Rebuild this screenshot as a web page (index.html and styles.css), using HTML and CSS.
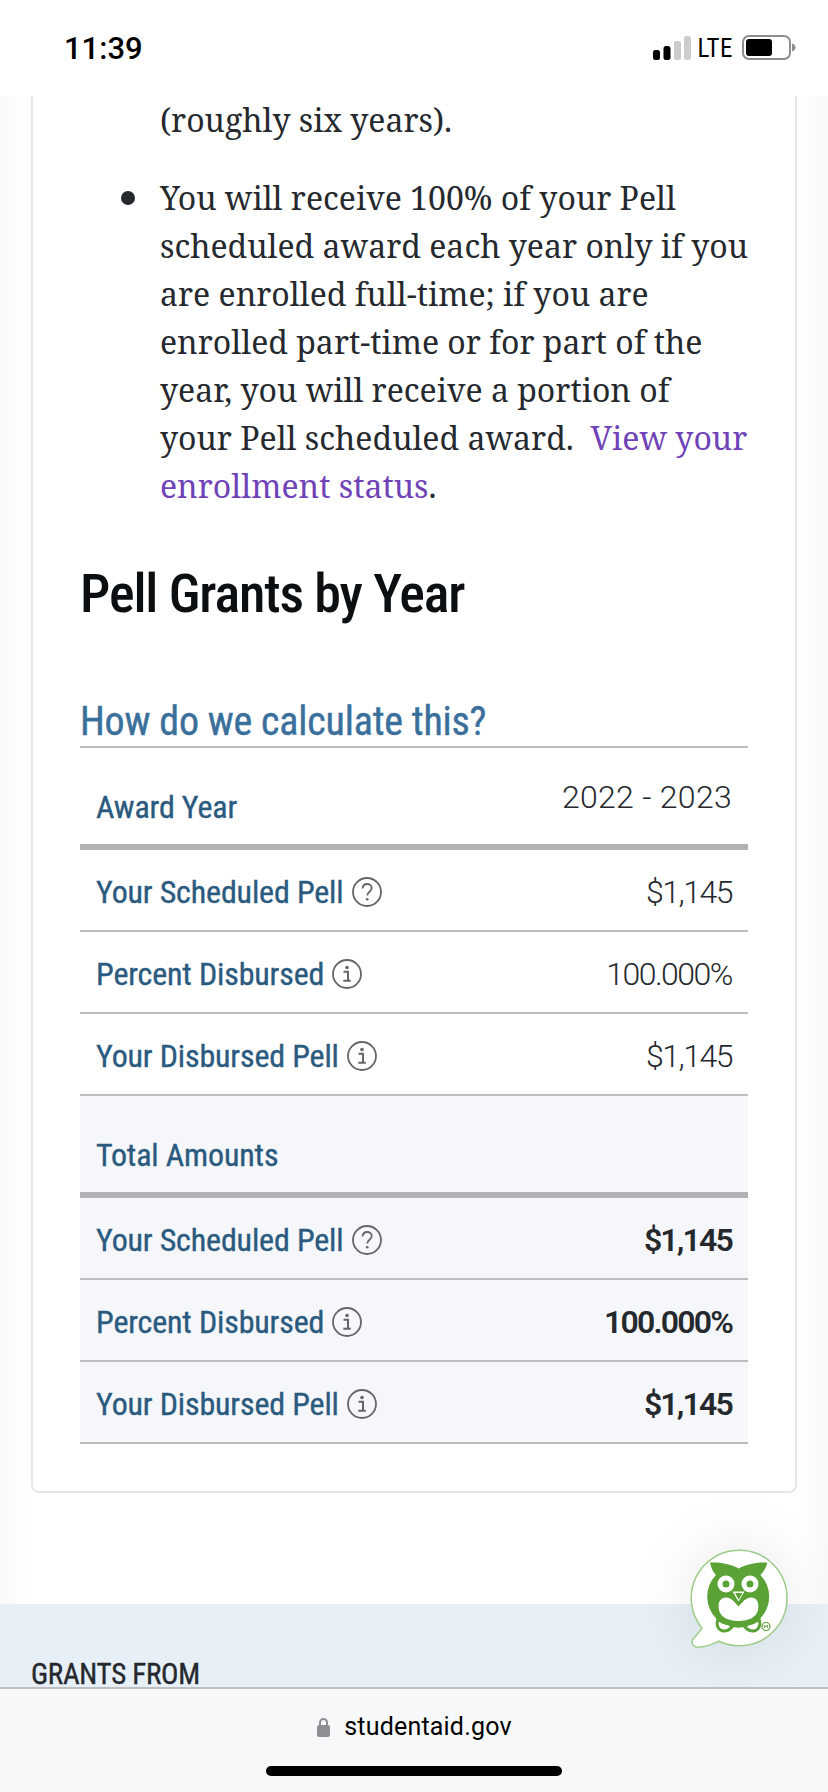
FILE: index.html
```html
<!DOCTYPE html>
<html lang="en">
<head>
<meta charset="utf-8">
<title>Pell Grants by Year</title>
<link rel="stylesheet" href="styles.css">
</head>
<body>
<div class="phone">
  <header class="status">
    <span class="time">11:39</span>
    <div class="status-right">
      <svg class="signal" width="38" height="24" viewBox="0 0 38 24"><rect x="0" y="14" width="7" height="10" rx="2.500" fill="#000"/><rect x="10.500" y="10" width="7" height="14" rx="2.500" fill="#000"/><rect x="21" y="5" width="7" height="19" rx="2.500" fill="#ccc"/><rect x="31" y="0" width="7" height="24" rx="2.500" fill="#ccc"/></svg>
      <span class="lte">LTE</span>
      <svg class="battery" width="54" height="26" viewBox="0 0 54 26"><rect x="1" y="1" width="47" height="23" rx="6" fill="#fff" stroke="#8e8e8e" stroke-width="2"/><rect x="4" y="4" width="26" height="17" rx="3" fill="#000"/><path d="M50 8.500c2.500 .8 3.500 2.200 3.500 4s-1 3.200-3.500 4z" fill="#8e8e8e"/></svg>
    </div>
  </header>
  <main class="viewport">
    <section class="card">
      <ul class="notes">
        <li class="cont">(roughly six years).</li>
        <li>You will receive 100% of your Pell<br>scheduled award each year only if you<br>are enrolled full-time; if you are<br>enrolled part-time or for part of the<br>year, you will receive a portion of<br>your Pell scheduled award. &nbsp;<a class="link" href="#">View your<br>enrollment status</a>.</li>
      </ul>
      <h2 class="title">Pell Grants by Year</h2>
      <a class="calc" href="#">How do we calculate this?</a>
      <div class="table">
        <div class="row head"><span class="label">Award Year</span><span class="val up">2022 - 2023</span></div>
        <div class="row"><span class="label">Your Scheduled Pell <svg class="ico" viewBox="0 0 30 30"><use href="#q"/></svg></span><span class="val">$1,145</span></div>
        <div class="row"><span class="label">Percent Disbursed <svg class="ico" viewBox="0 0 30 30"><use href="#i"/></svg></span><span class="val">100.000%</span></div>
        <div class="row"><span class="label">Your Disbursed Pell <svg class="ico" viewBox="0 0 30 30"><use href="#i"/></svg></span><span class="val">$1,145</span></div>
        <div class="totals">
          <div class="row head total-head"><span class="label">Total Amounts</span></div>
          <div class="row"><span class="label">Your Scheduled Pell <svg class="ico" viewBox="0 0 30 30"><use href="#q"/></svg></span><span class="val strong">$1,145</span></div>
          <div class="row"><span class="label">Percent Disbursed <svg class="ico" viewBox="0 0 30 30"><use href="#i"/></svg></span><span class="val strong">100.000%</span></div>
          <div class="row"><span class="label">Your Disbursed Pell <svg class="ico" viewBox="0 0 30 30"><use href="#i"/></svg></span><span class="val strong">$1,145</span></div>
        </div>
      </div>
    </section>
    <footer class="band"><span class="band-title">GRANTS FROM</span></footer>
    <svg class="owl" width="100" height="104" viewBox="0 0 100 104">
      <path d="M49.300 2.300a47.700 47.700 0 0 1 0 95.400c-7 0-14-1.600-20.300-4.500c-6 3-13 6-21 6c-4 0-7-3-5.500-7.500c3-3.500 7-7.500 9.500-11.500a47.700 47.700 0 0 1 37.300-77.900z" fill="#fff" stroke="#9ccb88" stroke-width="1.500"/>
      <path d="M20 14.500c9-.5 20 1 28.700 6c8.700-5 19.700-6.500 28.700-6c-1 5-3.500 9-7 12.500a31 31 0 1 1-44.400 0c-3.500-3.500-5-7.500-6-12.500z" fill="#5aa235"/>
      <circle cx="36" cy="36" r="8.500" fill="#fff"/><circle cx="60" cy="36" r="8.500" fill="#fff"/>
      <circle cx="36" cy="36" r="3.500" fill="#5aa235"/><circle cx="60" cy="36" r="3.500" fill="#5aa235"/>
      <path d="M29 62c-1-6 0-10 4-12c4-1.500 8 .5 10 2.500l5.500 6l5.500-6c2-2 6-4 10-2.500c4 2 5 6 4 12c-1.500 7-9 11-19.500 11s-18-4-19.500-11z" fill="#fff"/>
      <path d="M42.500 43.500h12l-6 10z" fill="#fff"/><path d="M45 45h7.500l-3.750 6.500z" fill="#5aa235"/>
      <path d="M28 71c3 3 7 4.500 11 5c1 .3 1.500 1 3 3c-2.500 3-5 4-8 4c-5 0-8.500-5-6-12zM69 71c-3 3-7 4.500-11 5c-1 .3-1.500 1-3 3c2.500 3 5 4 8 4c5 0 8.500-5 6-12z" fill="#fff" stroke="#5aa235" stroke-width="3"/>
      <circle cx="76" cy="78.500" r="4" fill="none" stroke="#5aa235" stroke-width="1.200"/><path d="M74.500 80v-3l1.500 2l1.500-2v3" fill="none" stroke="#5aa235" stroke-width=".8"/>
    </svg>
  </main>
  <div class="browser">
    <div class="address">
      <svg class="lock" width="13" height="20" viewBox="0 0 13 20"><path d="M3 9V5.500a3.500 3.500 0 0 1 7 0V9" fill="none" stroke="#8e8e93" stroke-width="2"/><rect x="0" y="8" width="13" height="12" rx="2" fill="#8e8e93"/></svg>
      <span class="url">studentaid.gov</span>
    </div>
    <div class="home"></div>
  </div>
</div>
<svg class="defs" width="0" height="0">
  <defs>
    <g id="q"><circle cx="15" cy="15" r="14" fill="none" stroke="#666" stroke-width="1.800"/><path d="M10.500 11.500c.3-3 2.200-4.500 4.700-4.500s4.500 1.700 4.500 4c0 3.700-4.400 3.700-4.400 7.500" fill="none" stroke="#666" stroke-width="1.800"/><circle cx="15.200" cy="22.300" r="1.300" fill="#666"/></g>
    <g id="i"><circle cx="15" cy="15" r="14" fill="none" stroke="#666" stroke-width="1.800"/><circle cx="15" cy="8.500" r="1.800" fill="#666"/><path d="M11.500 12.800h4.500v8.700M11.300 21.800h7.500" fill="none" stroke="#666" stroke-width="2"/></g>
  </defs>
</svg>
</body>
</html>
```
FILE: styles.css
```css
* { box-sizing: border-box; }
html, body { margin: 0; padding: 0; }
body { width: 828px; height: 1792px; overflow: hidden; background: #fff; }
.defs { display: block; height: 0; }
.phone { width: 828px; height: 1792px; display: flex; flex-direction: column; overflow: hidden; }

.status { height: 96px; flex: none; display: flex; justify-content: space-between; align-items: center; padding: 0 32px 0 64px; background: #fff; }
.time { font: 500 31px/1 "Roboto", "Liberation Sans", sans-serif; color: #000; }
.status-right { display: flex; align-items: center; gap: 7px; }
.lte { font: 400 25px/1 "Roboto", "Liberation Sans", sans-serif; font-stretch: 75%; letter-spacing: .5px; color: #000; margin-right: 2px; }

.viewport { flex: 1; position: relative; overflow: hidden; background: linear-gradient(90deg, #f9f9f9, #fff 30px, #fff 798px, #f9f9f9); display: flex; flex-direction: column; }
.card { flex: none; height: 1397px; margin: 0 31px; background: #fff; border: 2px solid #e4e6e8; border-top: 0; border-radius: 0 0 8px 8px; padding: 0 47px 0 47px; }

.notes { list-style: none; margin: 0; padding: 0 0 0 80px; font: 400 32px/48px "Noto Serif", "DejaVu Serif", serif; color: #25292e; white-space: nowrap; }
.notes li { position: relative; margin-top: 30px; }
.notes li.cont { margin-top: 0; }
.notes li:not(.cont)::before { content: ""; position: absolute; left: -39px; top: 17px; width: 14px; height: 14px; border-radius: 50%; background: #25292e; }
.link { color: #6f42b8; text-decoration: none; }

.title { margin: 52px 0 0; font: 500 54px/64px "Roboto", "Liberation Sans", sans-serif; font-stretch: 75%; letter-spacing: -1.1px; color: #0b0f12; }
.calc { display: block; margin-top: 72px; font: 400 40px/48px "Roboto", "Liberation Sans", sans-serif; font-stretch: 75%; letter-spacing: -.2px; -webkit-text-stroke: .4px #3a6f9c; color: #3a6f9c; text-decoration: none; }

.table { border-top: 2px solid #bbbdbe; }
.row { height: 82px; display: flex; justify-content: space-between; align-items: center; padding: 4px 16px 0; border-bottom: 2px solid #bbbdbe; }
.row.head { height: 102px; padding-top: 22px; border-bottom: 6px solid #b0b3b4; }
.totals { background: #f5f7fa; }
.label { display: flex; align-items: center; gap: 8px; font: 400 32px/1 "Roboto", "Liberation Sans", sans-serif; font-stretch: 75%; letter-spacing: -.15px; -webkit-text-stroke: .35px #2b5a7f; color: #2b5a7f; }
.val { font: 350 32px/1 "Roboto", "Liberation Sans", sans-serif; letter-spacing: -1.5px; color: #25292e; }
.val.up { align-self: flex-start; margin-top: 11px; letter-spacing: .3px; }
.val.strong { font-weight: 600; letter-spacing: -1.8px; }
.ico { width: 30px; height: 30px; flex: none; }

.band { flex: 1; margin-top: 111px; background: #e8f0f7; padding: 56px 31px 0; overflow: hidden; }
.band-title { font: 400 29px/1 "Roboto", "Liberation Sans", sans-serif; font-stretch: 75%; letter-spacing: -.3px; -webkit-text-stroke: .35px #25292e; color: #25292e; }
.owl { position: absolute; left: 690px; top: 1452px; filter: drop-shadow(0 0 30px rgba(0,0,0,.09)); }

.browser { height: 105px; flex: none; background: #f6f8f9; border-top: 2px solid #bfbfbf; display: flex; flex-direction: column; align-items: center; }
.address { display: flex; align-items: center; gap: 14px; margin-top: 25px; margin-left: 1px; }
.url { font: 400 25px/1 "Roboto", "Liberation Sans", sans-serif; letter-spacing: .2px; color: #000; }
.home { width: 296px; height: 10px; border-radius: 5px; background: #000; margin-top: 27px; }
```
